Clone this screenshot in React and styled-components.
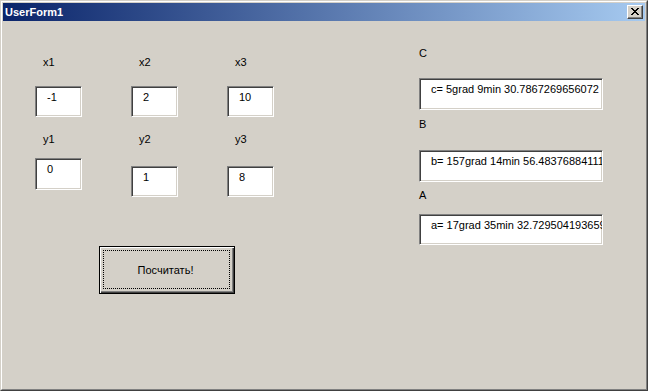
import React from "react";
import styled, { createGlobalStyle } from "styled-components";

const Global = createGlobalStyle`
  html, body { margin: 0; padding: 0; overflow: hidden; background: #d4d0c8; }
  * { box-sizing: border-box; }
`;

const Window = styled.div`
  width: 648px;
  height: 391px;
  border: 1px solid;
  border-color: #d4d0c8 #404040 #404040 #d4d0c8;
  background: #d4d0c8;
  font-family: "Liberation Sans", Arial, sans-serif;
  font-size: 11px;
  line-height: 13px;
  color: #000;
`;

const Frame = styled.div`
  height: 100%;
  border: 1px solid;
  border-color: #ffffff #808080 #808080 #ffffff;
  padding: 1px;
  display: flex;
  flex-direction: column;
`;

const TitleBar = styled.div`
  height: 18px;
  flex: none;
  display: flex;
  align-items: center;
  justify-content: space-between;
  padding: 0 2px 0 2px;
  background: linear-gradient(to right, #0a246a, #a6caf0);
`;

const Title = styled.div`
  color: #fff;
  font-weight: bold;
  line-height: 18px;
`;

const CloseButton = styled.div`
  width: 16px;
  height: 14px;
  background: #d4d0c8;
  border: 1px solid;
  border-color: #ffffff #404040 #404040 #ffffff;
  box-shadow: inset -1px -1px #808080;
  display: flex;
  align-items: center;
  justify-content: center;
  padding-bottom: 1px;
  padding-right: 1px;
`;

const Body = styled.div`
  flex: 1;
  display: flex;
  align-items: flex-start;
  padding-left: 32px;
`;

const LeftPanel = styled.div`
  display: flex;
  flex-direction: column;
  align-items: flex-start;
  margin-top: 35px;
`;

const Grid = styled.div`
  display: grid;
  grid-template-columns: repeat(3, 47px);
  column-gap: 49px;
  align-items: start;
`;

const Column = styled.div`
  display: flex;
  flex-direction: column;
`;

const Label = styled.div`
  height: 13px;
  margin-left: ${(p) => p.$indent ?? 0}px;
  margin-top: ${(p) => p.$top ?? 0}px;
  white-space: nowrap;
`;

const Field = styled.div`
  width: ${(p) => p.$w}px;
  height: ${(p) => p.$h}px;
  margin-top: ${(p) => p.$top ?? 0}px;
  background: #fff;
  border: 1px solid;
  border-color: #808080 #ffffff #ffffff #808080;
  box-shadow: inset 1px 1px #404040, inset -1px -1px #d4d0c8;
  padding: 4px 2px 0 11px;
  white-space: nowrap;
  overflow: hidden;
`;

const Button = styled.div`
  position: relative;
  width: 136px;
  height: 48px;
  margin-top: 49px;
  margin-left: 64px;
  border: 1px solid #000;
  box-shadow: inset 1px 1px #ffffff, inset -1px -1px #404040, inset -2px -2px #808080;
  display: flex;
  align-items: center;
  justify-content: center;
  padding-right: 3px;
  &::before {
    content: "";
    position: absolute;
    left: 3px;
    top: 3px;
    right: 4px;
    bottom: 4px;
    border: 1px dotted #000;
  }
`;

const RightPanel = styled.div`
  display: flex;
  flex-direction: column;
  margin-left: 145px;
  margin-top: 26px;
`;

const CloseIcon = () => (
  <svg width="8" height="7" viewBox="0 0 8 7" shapeRendering="crispEdges">
    <path
      fill="#000"
      d="M0 0h2v1h-2z M6 0h2v1h-2z M1 1h2v1h-2z M5 1h2v1h-2z M2 2h4v1h-4z M3 3h2v1h-2z M2 4h4v1h-4z M1 5h2v1h-2z M5 5h2v1h-2z M0 6h2v1h-2z M6 6h2v1h-2z"
    />
  </svg>
);

const leftCols = [
  { top: "x1", topVal: "-1", bottom: "y1", bottomVal: "0", gap: 12, h: 32 },
  { top: "x2", topVal: "2", bottom: "y2", bottomVal: "1", gap: 20, h: 31 },
  { top: "x3", topVal: "10", bottom: "y3", bottomVal: "8", gap: 20, h: 31 },
];

const results = [
  { label: "C", value: "c= 5grad 9min 30.7867269656072", lt: 0, bt: 18, h: 32 },
  { label: "B", value: "b= 157grad 14min 56.4837688411152", lt: 8, bt: 19, h: 32 },
  { label: "A", value: "a= 17grad 35min 32.7295041936593", lt: 7, bt: 12, h: 31 },
];

export default function App() {
  return (
    <>
      <Global />
      <Window>
        <Frame>
          <TitleBar>
            <Title>UserForm1</Title>
            <CloseButton>
              <CloseIcon />
            </CloseButton>
          </TitleBar>
          <Body>
            <LeftPanel>
              <Grid>
                {leftCols.map((c) => (
                  <Column key={c.top}>
                    <Label $indent={8}>{c.top}</Label>
                    <Field $w={47} $h={31} $top={17}>{c.topVal}</Field>
                    <Label $indent={8} $top={16}>{c.bottom}</Label>
                    <Field $w={47} $h={c.h} $top={c.gap}>{c.bottomVal}</Field>
                  </Column>
                ))}
              </Grid>
              <Button>Посчитать!</Button>
            </LeftPanel>
            <RightPanel>
              {results.map((r) => (
                <React.Fragment key={r.label}>
                  <Label $top={r.lt}>{r.label}</Label>
                  <Field $w={184} $h={r.h} $top={r.bt}>{r.value}</Field>
                </React.Fragment>
              ))}
            </RightPanel>
          </Body>
        </Frame>
      </Window>
    </>
  );
}
